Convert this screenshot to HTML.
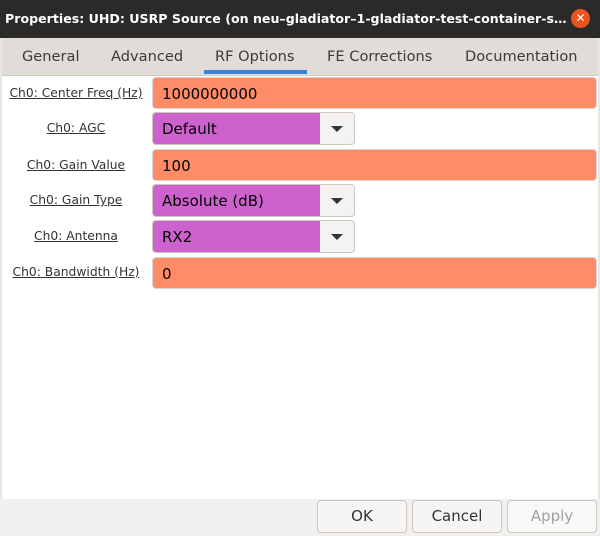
<!DOCTYPE html>
<html><head><style>
body{margin:0;width:600px;height:536px;overflow:hidden;font-family:"Liberation Sans","DejaVu Sans",sans-serif;background:#fff;position:relative}
.title{position:absolute;left:0;top:0;width:600px;height:38px;background:#2c2a29;color:#fff;font-weight:bold;font-size:12.6px;font-family:"DejaVu Sans",sans-serif}
.title span{position:absolute;left:5px;top:11px;width:562px;overflow:hidden;white-space:nowrap}
.close{position:absolute;left:571px;top:9px;width:19px;height:19px;border-radius:50%;background:#e95420;color:#fff;font-size:12px;text-align:center;line-height:19px;font-weight:normal}
.tabs{position:absolute;left:2px;top:42px;width:596px;height:33px;background:#e0ddd9;border-bottom:1px solid #cfcac4}
.tab{position:absolute;top:6px;font-size:14.6px;color:#3a3a3a;font-family:"DejaVu Sans",sans-serif}
.ul{position:absolute;left:204px;top:70px;width:103px;height:4px;background:#3584e4}
.lab{position:absolute;left:0;width:152px;text-align:center;font-size:12.3px;color:#333;text-decoration:underline;font-family:"DejaVu Sans",sans-serif}
.ent{position:absolute;left:152px;width:445px;height:32px;background:#ff8c66;border:1px solid #d9d4cf;border-radius:4px;box-sizing:border-box;font-size:15px;padding:7px 0 0 9px;color:#000;font-family:"DejaVu Sans",sans-serif}
.cb{position:absolute;left:152px;width:203px;height:33px;border:1px solid #cdc7c2;border-radius:4px;box-sizing:border-box;overflow:hidden;background:#f4f3f2}
.cb .t{position:absolute;left:0;top:0;width:167px;height:33px;background:#cd61cd;font-size:15px;padding:7px 0 0 9px;box-sizing:border-box;font-family:"DejaVu Sans",sans-serif}
.cb .a{position:absolute;left:178px;top:13px;width:0;height:0;border-left:6px solid transparent;border-right:6px solid transparent;border-top:6px solid #333}
.bot{position:absolute;left:0;top:499px;width:600px;height:37px;background:#f1f0ef}
.btn{position:absolute;top:500px;width:90px;height:33px;border:1px solid #cdc7c2;border-radius:4px;box-sizing:border-box;background:#f6f5f4;text-align:center;font-size:15px;line-height:31px;color:#333;font-family:"DejaVu Sans",sans-serif}
</style></head><body>
<div class="title"><span>Properties: UHD: USRP Source (on neu–gladiator–1-gladiator-test-container-s…</span><div class="close">✕</div></div>
<div style="position:absolute;left:0;top:38px;width:600px;height:4px;background:#e0ddd9"></div>
<div style="position:absolute;left:0;top:38px;width:2px;height:498px;background:#e8e6e3"></div>
<div style="position:absolute;left:598px;top:38px;width:2px;height:498px;background:#e8e6e3"></div>
<div class="tabs">
<div class="tab" style="left:20px">General</div>
<div class="tab" style="left:109px">Advanced</div>
<div class="tab" style="left:213px">RF Options</div>
<div class="tab" style="left:325px">FE Corrections</div>
<div class="tab" style="left:463px">Documentation</div>
</div>
<div class="ul"></div>
<div class="lab" style="top:86px">Ch0: Center Freq (Hz)</div>
<div class="ent" style="top:77px">1000000000</div>
<div class="lab" style="top:121px">Ch0: AGC</div>
<div class="cb" style="top:112px"><div class="t">Default</div><div class="a"></div></div>
<div class="lab" style="top:158px">Ch0: Gain Value</div>
<div class="ent" style="top:149px">100</div>
<div class="lab" style="top:193px">Ch0: Gain Type</div>
<div class="cb" style="top:184px"><div class="t">Absolute (dB)</div><div class="a"></div></div>
<div class="lab" style="top:229px">Ch0: Antenna</div>
<div class="cb" style="top:220px"><div class="t">RX2</div><div class="a"></div></div>
<div class="lab" style="top:265px">Ch0: Bandwidth (Hz)</div>
<div class="ent" style="top:257px">0</div>
<div class="bot"></div>
<div class="btn" style="left:317px">OK</div>
<div class="btn" style="left:412px">Cancel</div>
<div class="btn" style="left:507px;color:#a0a09e;background:#f8f8f7">Apply</div>
</body></html>
